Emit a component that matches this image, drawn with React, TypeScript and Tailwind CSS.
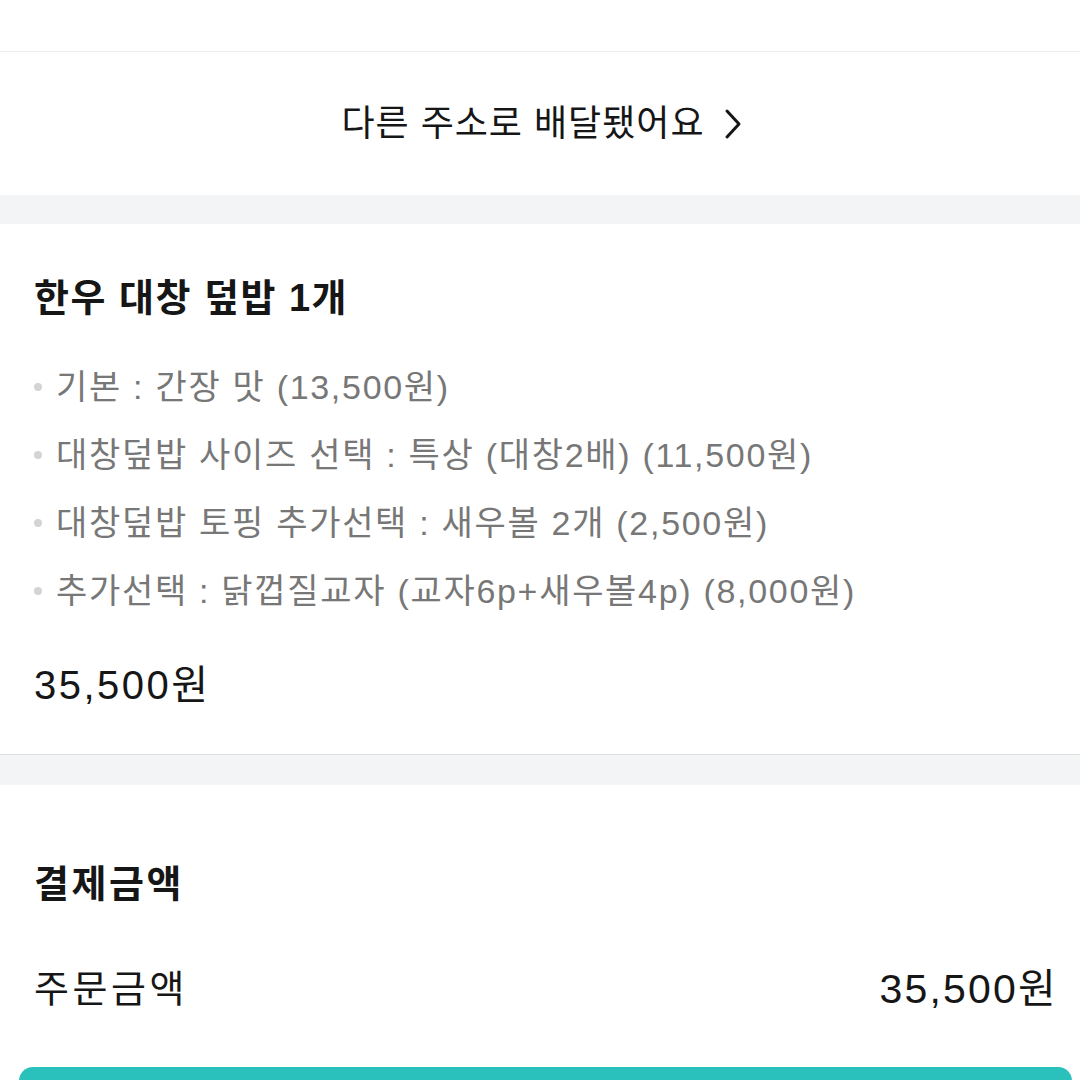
const options = [
  '기본 : 간장 맛 (13,500원)',
  '대창덮밥 사이즈 선택 : 특상 (대창2배) (11,500원)',
  '대창덮밥 토핑 추가선택 : 새우볼 2개 (2,500원)',
  '추가선택 : 닭껍질교자 (교자6p+새우볼4p) (8,000원)',
]

export default function App() {
  return (
    <div
      className="w-[1080px] h-[1080px] overflow-hidden bg-white text-[#161616]"
      style={{ fontFamily: '"Liberation Sans", "Noto Sans CJK KR", sans-serif' }}
    >
      {/* top strip */}
      <div className="h-[52px] border-b border-[#ececec] bg-white" />

      {/* other address link */}
      <div className="h-[143px] flex items-center justify-center pl-[4px]">
        <span className="text-[36px] leading-none tracking-[1px]">다른 주소로 배달됐어요</span>
        <svg width="20" height="32" viewBox="0 0 20 32" className="ml-[18px]">
          <path d="M4 3 L16 16 L4 29" fill="none" stroke="#161616" strokeWidth="3" strokeLinecap="round" strokeLinejoin="round" />
        </svg>
      </div>

      <div className="h-[29px] bg-[#f2f4f5]" />

      {/* order item */}
      <div className="bg-white border-b border-[#dcdfe0] pl-[34px] pt-[50px] pb-[45px]">
        <h2 className="text-[38px] leading-[48px] font-bold tracking-[1.5px]">한우 대창 덮밥 1개</h2>
        <ul className="mt-[31px] flex flex-col">
          {options.map((o) => (
            <li key={o} className="h-[68px] flex items-center gap-[14px] text-[#777777]">
              <span className="w-[8px] h-[8px] rounded-full bg-[#d4d4d4] shrink-0" />
              <span className="text-[34px] leading-none tracking-[1.7px]">{o}</span>
            </li>
          ))}
        </ul>
        <div className="mt-[36px] text-[40px] leading-[48px] tracking-[2.5px]">35,500원</div>
      </div>

      <div className="h-[30px] bg-[#f2f4f5]" />

      {/* payment */}
      <div className="bg-white pt-[75px]">
        <h2 className="pl-[34px] text-[38px] leading-[48px] font-bold tracking-[2.5px]">결제금액</h2>
        <div className="mt-[57px] pl-[34px] pr-[22px] flex items-center justify-between leading-[48px]">
          <span className="text-[38px] tracking-[3.5px]">주문금액</span>
          <span className="text-[41px] tracking-[2.2px]">35,500원</span>
        </div>
        <div className="mt-[54px] ml-[19px] mr-[8px] h-[70px] rounded-[14px] bg-[#2ac1bc]" />
      </div>
    </div>
  )
}
